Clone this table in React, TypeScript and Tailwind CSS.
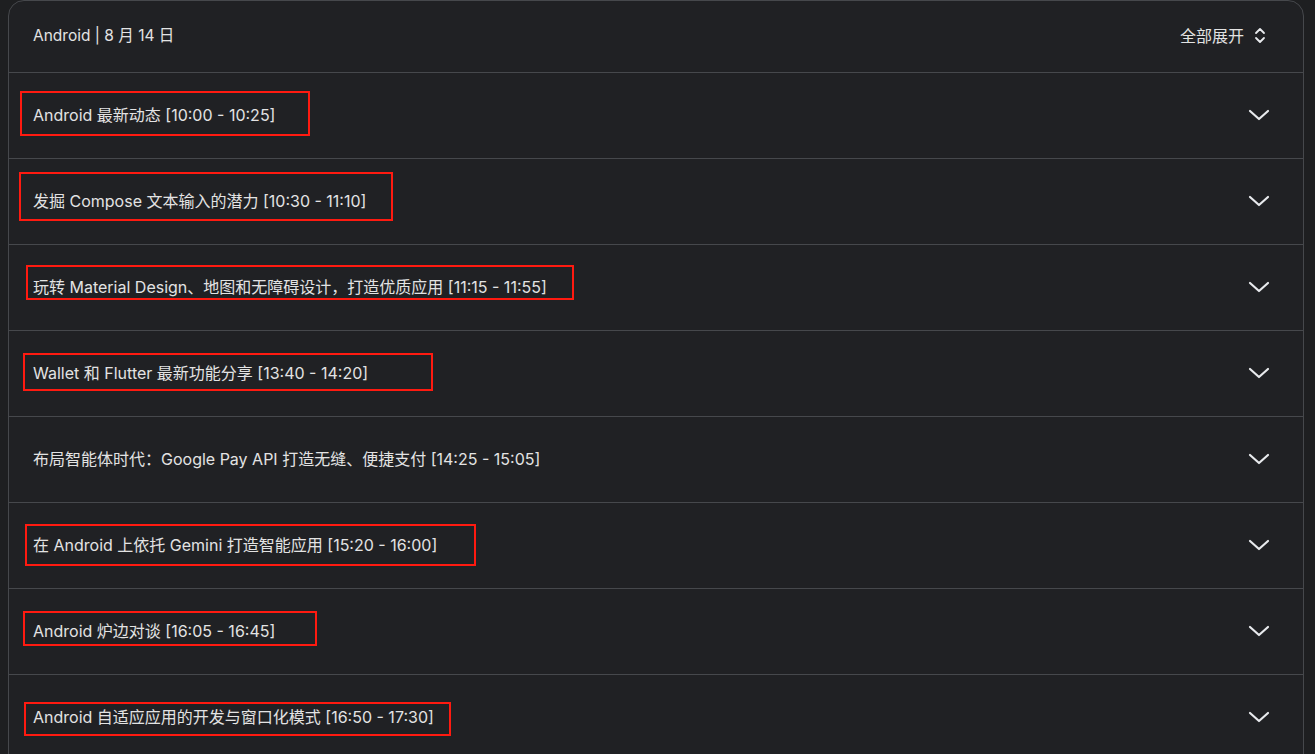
type Session = {
  title: string;
  // red annotation box, relative to the row: left, top, width, height
  box?: [number, number, number, number];
};

const sessions: Session[] = [
  { title: 'Android 最新动态 [10:00 - 10:25]', box: [11, 18, 290, 45] },
  { title: '发掘 Compose 文本输入的潜力 [10:30 - 11:10]', box: [10, 13, 374, 49] },
  { title: '玩转 Material Design、地图和无障碍设计，打造优质应用 [11:15 - 11:55]', box: [17, 20, 548, 35] },
  { title: 'Wallet 和 Flutter 最新功能分享 [13:40 - 14:20]', box: [14, 22, 410, 38] },
  { title: '布局智能体时代：Google Pay API 打造无缝、便捷支付 [14:25 - 15:05]' },
  { title: '在 Android 上依托 Gemini 打造智能应用 [15:20 - 16:00]', box: [16, 21, 451, 42] },
  { title: 'Android 炉边对谈 [16:05 - 16:45]', box: [14, 22, 294, 35] },
  { title: 'Android 自适应应用的开发与窗口化模式 [16:50 - 17:30]', box: [15, 27, 427, 34] },
];

function Chevron() {
  return (
    <svg width="22" height="12" viewBox="0 0 22 12" fill="none" className="text-[#e8eaed]">
      <polyline points="2,2 11,10 20,2" stroke="currentColor" strokeWidth="2.2" strokeLinecap="round" strokeLinejoin="round" />
    </svg>
  );
}

function UpDown() {
  return (
    <svg width="12" height="17" viewBox="0 0 12 17" fill="none" className="text-[#e8eaed]">
      <polyline points="2,6 6,2 10,6" stroke="currentColor" strokeWidth="1.8" strokeLinecap="round" strokeLinejoin="round" />
      <polyline points="2,11 6,15 10,11" stroke="currentColor" strokeWidth="1.8" strokeLinecap="round" strokeLinejoin="round" />
    </svg>
  );
}

export default function App() {
  return (
    <div
      className="h-[754px] overflow-hidden bg-[#1e1f21] pl-2 pr-[11px] text-[#e3e3e3]"
      style={{ fontFamily: 'Inter, "Noto Sans CJK SC", sans-serif' }}
    >
      <div className="h-[770px] rounded-2xl border border-[#46484c] bg-[#202124]">
        <div className="flex h-[72px] items-center justify-between pl-6 pr-[37px] pb-[2px] border-b border-[#46484c] text-[15.5px]">
          <span>Android | 8 月 14 日</span>
          <button className="flex items-center gap-[10px]">
            <span className="text-base">全部展开</span>
            <UpDown />
          </button>
        </div>

        {sessions.map((s, i) => (
          <div
            key={i}
            className="relative flex h-[86px] items-center justify-between pl-6 pr-[33px] pb-[2px] border-b border-[#46484c] last:border-b-0 text-base"
          >
            <span>{s.title}</span>
            <Chevron />
            {s.box && (
              <div
                className="pointer-events-none absolute border-2 border-[#ff1a10]"
                style={{ left: s.box[0], top: s.box[1], width: s.box[2], height: s.box[3] }}
              />
            )}
          </div>
        ))}
      </div>
    </div>
  );
}
